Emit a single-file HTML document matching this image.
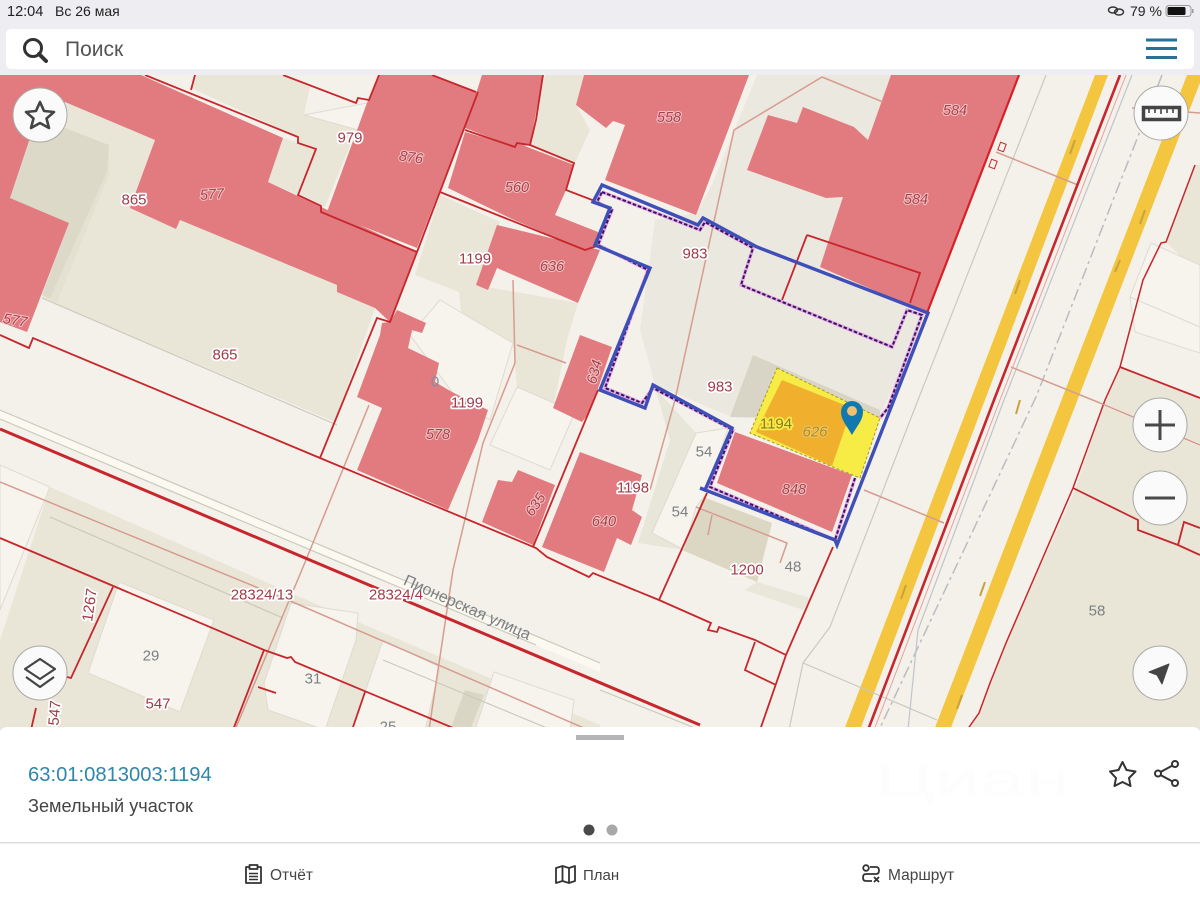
<!DOCTYPE html>
<html lang="ru"><head><meta charset="utf-8"><title>Карта</title>
<style>
html,body{margin:0;padding:0;background:#fff}
body{width:1200px;height:900px;overflow:hidden;position:relative;font-family:"Liberation Sans","Noto Sans CJK SC",sans-serif}
svg{position:absolute;left:0;top:0;display:block}
.l text{font-family:"Liberation Sans",sans-serif;font-size:15px;fill:#a23a48;text-anchor:middle;dominant-baseline:central;paint-order:stroke;stroke:#fff;stroke-width:3.5px;stroke-linejoin:round}
.l .p{stroke:#f3c4c4;stroke-width:2px;font-style:italic;fill:#a8404c;font-size:14.5px}
.l .g{fill:#7c8084;stroke:none;font-size:15px}
.ui{font-family:"Liberation Sans",sans-serif}
</style></head><body>
<svg width="1200" height="900" viewBox="0 0 1200 900" xmlns="http://www.w3.org/2000/svg">
<defs><clipPath id="m"><rect x="0" y="75" width="1200" height="655"/></clipPath></defs>
<rect width="1200" height="900" fill="#fff"/>
<g clip-path="url(#m)">
<rect y="75" width="1200" height="655" fill="#f4f1ea"/>
<!-- beige zones -->
<g fill="#e9e6d8">
<polygon points="65,102 155,140 130,208 176,229 180,220 337,285 337,292 375,308 335,422 42,298 69,223 10,198"/>
<polygon points="191,88 298,137 298,143 316,149 298,193 325,207 367,103 304,115 310,87 283,75 195,75"/>
<polygon points="283,138 268,182 298,195 316,149"/>
<polygon points="545,75 584,75 576,105 590,130 574,165 530,145"/>
<polygon points="440,195 500,222 476,285 578,303 567,340 553,408 517,387 513,343 461,312 459,292 415,275"/>
<polygon points="50,487 300,597 365,625 600,725 600,730 0,730 0,640"/>
<polygon points="1120,367 1200,398 1200,730 967,730 979,713 990,683 1006,643 1075,490 1105,400"/>
<polygon points="1166,242 1195,165 1200,165 1200,275"/>
</g>
<polygon fill="#ebe8df" points="757,75 1019,75 927,313 878,420 732,417 655,385 640,330 655,220 696,213 711,187"/>
<polygon fill="#dcd9c9" points="31,135 65,128 109,145 107,172 57,302 42,295 69,223 10,198"/>
<polygon fill="#e4e1d2" points="109,145 109,175 57,302 50,298 107,172"/>
<polygon fill="#d8d5c6" points="753,355 880,410 880,420 730,417"/>
<polygon fill="#dcd7c3" points="703,497 772,523 757,582 682,550"/>
<polygon fill="#e9e6da" points="757,582 810,598 803,610 745,590"/>
<polygon fill="#e8e5d9" points="655,388 696,433 684,550 638,543 670,440"/>
<!-- light blocks -->
<g fill="#f7f4ee" stroke="#dedbd0" stroke-width="1">
<polygon points="696,433 728,428 707,493 696,507 684,550 652,533"/>
<polygon points="119,582 214,620 180,712 88,673"/>
<polygon points="291,603 358,613 356,640 325,730 268,710 264,683"/>
<polygon points="383,640 440,667 425,730 352,730"/>
<polygon points="494,672 574,700 570,730 475,730"/>
<polygon points="0,465 50,487 0,610"/>
<polygon points="1151,243 1200,265 1200,327 1130,297"/>
<polygon points="1130,297 1200,327 1200,353 1135,332"/>
<polygon points="304,115 367,103 358,130"/>
<polygon points="410,335 440,300 513,343 490,420 452,392"/>
<polygon points="517,387 575,412 550,470 490,445"/>
</g>
<polygon fill="#d9d6c5" points="465,690 484,695 470,730 450,730"/>
<polygon fill="#fbf9f0" points="0,410 600,663 600,672 0,419"/>
<!-- pink buildings -->
<g fill="#e27b7f">
<polygon points="0,75 141,75 283,138 268,182 417,252 390,322 375,308 337,292 337,285 180,220 176,229 130,208 155,140 65,102 31,135 10,198 69,223 27,332 0,322"/>
<polygon points="379,75 432,75 478,92 417,248 327,212 367,103"/>
<polygon points="482,75 543,75 530,145 515,147 465,128"/>
<polygon points="465,132 517,147 517,143 574,165 566,190 555,215 598,232 598,245 585,250 514,220 448,188"/>
<polygon points="497,225 600,250 578,303 497,268 488,290 476,285"/>
<polygon points="584,75 749,75 696,215 605,180 625,125 613,121 606,128 576,105"/>
<polygon points="891,75 1019,75 927,313 820,267 843,197 826,198 747,170 768,115 797,123 803,107 854,127 868,140"/>
<polygon points="397,310 426,323 422,333 412,330 408,348 439,363 435,382 452,392 488,410 478,440 448,510 357,470 382,408 357,397 380,335 382,323 390,322"/>
<polygon points="580,335 612,347 590,412 582,422 553,408"/>
<polygon points="518,470 555,485 533,545 482,522 498,480 512,482"/>
<polygon points="580,452 642,475 632,510 642,517 631,545 617,538 604,572 542,547"/>
<polygon points="735,432 852,475 832,532 717,483"/>
</g>
<!-- yellow roads -->
<polygon fill="#f4c63f" points="1095,75 1108,75 860,730 844,730"/>
<polygon fill="#f4c63f" points="1187,75 1203,75 950,730 934,730"/>
<g stroke="#c8a23c" stroke-width="2" fill="none">
<path d="M1075,140l-5,14M1020,280l-5,14M1145,210l-5,14M1020,400l-4,14M906,585l-5,14M962,695l-5,14M985,582l-5,14M1120,260l-5,12"/>
</g>
<!-- grey road lines -->
<g fill="none" stroke="#c9c9bc" stroke-width="1.2">
<path d="M1046,75 L918,400 L830,627 L803,663 L789,730"/>
<path d="M803,663 L937,720"/>
<path d="M42,298 L337,425"/>
<path d="M0,410 L600,663"/>
<path d="M0,419 L536,645"/>
<path d="M50,517 L283,618"/>
<path d="M383,660 L600,750"/>
<path d="M600,690 L800,770"/>
</g>
<path d="M1162,75 L1036,397 L879,730" fill="none" stroke="#b9bcc0" stroke-width="1.5" stroke-dasharray="12 4 3 4"/>
<path d="M1132,75 L1004,400 L918,630 L908,730" fill="none" stroke="#bfc4cc" stroke-width="1.2"/>
<!-- thin brown lines -->
<g fill="none" stroke="#d69c8f" stroke-width="1.5">
<path d="M822,77 L734,130 L675,400 L650,490"/>
<path d="M822,77 L883,102"/>
<path d="M996,152 L1078,185"/>
<path d="M1011,367 L1100,403"/>
<path d="M864,490 L944,523"/>
<path d="M696,507 L787,543 L780,563"/>
<path d="M0,482 L295,603 L600,735"/>
<path d="M513,280 L515,363 L483,443 L453,570 L429,730"/>
<path d="M369,405 L306,560 L235,730"/>
<path d="M517,345 L566,363"/>
<path d="M712,515 L708,535"/>
<path d="M1132,108 L1200,113"/>
</g>
<!-- red cadastre lines -->
<g fill="none" stroke="#c7262c" stroke-width="1.8" stroke-linejoin="miter">
<path d="M0,335 L29,348 L33,338 L320,458 L536,548 L547,557 L589,577 L593,573 L659,600 L711,623 L708,630 L717,632 L719,627 L755,640 L786,655"/>
<path d="M755,642 L745,670 L776,685"/>
<path d="M833,547 L786,655 L760,730"/>
<path d="M659,600 L707,493"/>
<path d="M0,538 L111,585 L264,650 L287,658 L291,657 L295,662 L470,735"/>
<path d="M113,587 L71,678 L67,677"/>
<path d="M264,650 L233,730"/>
<path d="M365,692 L352,730"/>
<path d="M36,708 L31,730"/>
<path d="M145,75 L298,137 L298,143 L316,149 L298,195 L321,206 L321,212 L417,252"/>
<path d="M191,90 L195,75"/>
<path d="M283,75 L356,103 L358,98 L369,100 L379,75"/>
<path d="M432,75 L476,92"/>
<path d="M478,92 L417,252 L390,322 L377,318 L320,458"/>
<path d="M465,130 L515,147 L517,143 L530,145 L536,120 L543,75"/>
<path d="M530,145 L574,163 L566,190 L600,203"/>
<path d="M440,192 L585,250 L600,245"/>
<path d="M598,390 L533,547"/>
<path d="M807,235 L920,273 L910,303"/>
<path d="M807,235 L782,300"/>
<path d="M1195,165 L1166,242 L1161,243 L1143,280 L1120,367 L1105,400 L1073,488 L1006,643 L990,683 L979,713 L967,730" stroke-width="1.5"/>
<path d="M1120,367 L1200,398"/>
<path d="M1073,488 L1138,520 L1138,530 L1178,545 L1200,555"/>
<path d="M1178,545 L1184,522 L1200,528"/>
<path d="M1100,403 L1200,445" stroke-width="1.2" stroke="#d98a88"/>
<path d="M258,687 L276,693"/>
<path d="M0,429 L700,725" stroke-width="3"/>
<path d="M1120,75 L994,400 L868,730" stroke-width="2.6"/>
<path d="M1019,75 L927,313" stroke="#d82028" stroke-width="2.2"/>
</g>
<path d="M1126,75 L1000,400 L874,730" fill="none" stroke="#e8a0a0" stroke-width="1"/>
<rect x="999" y="143" width="6" height="8" fill="none" stroke="#c7262c" transform="rotate(20 1002 147)"/>
<rect x="990" y="160" width="6" height="8" fill="none" stroke="#c7262c" transform="rotate(20 993 164)"/>
<!-- highlighted plot -->
<polygon fill="#f7ec45" stroke="#a89a20" stroke-width="1" stroke-dasharray="3 2" points="777,368 880,418 860,478 750,433"/>
<polygon fill="#f0b02e" points="782,380 852,408 832,466 756,432"/>
<!-- cadastral outline -->
<path d="M602,192 L700,230 705,222 753,248 741,285 892,347 907,310 922,315 888,408 880,418 M855,478 L835,540 710,487 733,430 653,388 642,403 605,388 648,270 598,245 612,210 597,202 L602,192" fill="none" stroke="#e8a6e6" stroke-width="3.5"/>
<path d="M602,192 L700,230 705,222 753,248 741,285 892,347 907,310 922,315 888,408 880,418 M855,478 L835,540 710,487 733,430 653,388 642,403 605,388 648,270 598,245 612,210 597,202 L602,192" fill="none" stroke="#33185f" stroke-width="2" stroke-dasharray="3.5 2"/>
<path d="M602,185 L698,225 703,218 757,247 928,313 837,545 835,540 700,488 705,490 732,428 653,385 645,408 600,390 650,268 595,245 610,208 593,202 Z" fill="none" stroke="#3f4fb8" stroke-width="3.4" stroke-linejoin="miter"/>
<!-- labels -->
<g class="l">
<text x="350" y="138">979</text>
<text class="p" x="411" y="158" transform="rotate(8 411 158)">876</text>
<text class="p" x="669" y="118">558</text>
<text class="p" x="955" y="111">584</text>
<text class="p" x="916" y="200">584</text>
<text x="134" y="200">865</text>
<text class="p" x="212" y="195" transform="rotate(-4 212 195)">577</text>
<text class="p" x="517" y="188">560</text>
<text x="475" y="259">1199</text>
<text class="p" x="552" y="267">636</text>
<text x="695" y="254">983</text>
<text class="p" x="15" y="321" transform="rotate(10 15 321)">577</text>
<text x="225" y="355">865</text>
<text x="720" y="387">983</text>
<text x="467" y="403">1199</text>
<text class="g" x="435" y="382" style="fill:#8090a8">0</text>
<text class="p" x="595" y="372" transform="rotate(-75 595 372)">634</text>
<text class="p" x="438" y="435">578</text>
<text x="776" y="424" style="fill:#8a7a20;stroke:#f7ec45">1194</text>
<text x="815" y="432" style="fill:#a88a30;stroke:#f4c860;stroke-width:2px;font-style:italic">626</text>
<text class="g" x="704" y="452">54</text>
<text x="633" y="488">1198</text>
<text class="p" x="794" y="490">848</text>
<text class="p" x="536" y="505" transform="rotate(-55 536 505)">635</text>
<text class="p" x="604" y="522">640</text>
<text class="g" x="680" y="512">54</text>
<text x="747" y="570">1200</text>
<text class="g" x="793" y="567">48</text>
<text class="g" x="1097" y="611">58</text>
<text x="262" y="595">28324/13</text>
<text x="396" y="595">28324/4</text>
<text class="g" x="467" y="608" transform="rotate(24 467 608)" style="font-size:16px">Пионерская улица</text>
<text x="90" y="605" transform="rotate(-82 90 605)">1267</text>
<text class="g" x="151" y="656">29</text>
<text class="g" x="313" y="679">31</text>
<text x="158" y="704">547</text>
<text x="55" y="713" transform="rotate(-85 55 713)">547</text>
<text class="g" x="388" y="727">25</text>
</g>
<!-- pin -->
<path d="M852,435 C847,426 841,420 841,412 A11,11 0 0 1 863,412 C863,420 857,426 852,435 Z" fill="#1279ae"/>
<circle cx="852" cy="411" r="5" fill="#f0c070"/>
</g>

<!-- status bar + search -->
<rect width="1200" height="75" fill="#eeeef2"/>
<rect x="6" y="29" width="1188" height="40" rx="5" fill="#fff"/>
<g class="ui" fill="#222">
<text x="7" y="16" font-size="14.5">12:04</text>
<text x="55" y="16" font-size="14">Вс 26 мая</text>
<text x="1130" y="16" font-size="14">79 %</text>
</g>
<g fill="none" stroke="#333" stroke-width="1.4"><ellipse cx="1113" cy="10" rx="4.5" ry="3"/><ellipse cx="1119" cy="12" rx="4.5" ry="3"/></g>
<rect x="1166" y="5.500" width="25" height="11" rx="3" fill="none" stroke="#999"/>
<rect x="1167.500" y="7" width="18" height="8" rx="1.500" fill="#111"/>
<rect x="1192" y="9" width="1.500" height="4" fill="#999"/>
<circle cx="33" cy="48" r="8.500" fill="none" stroke="#333" stroke-width="3"/>
<path d="M39,54 L46,61" stroke="#333" stroke-width="4" stroke-linecap="round"/>
<text class="ui" x="65" y="56" font-size="21" fill="#555">Поиск</text>
<path d="M1146,40H1177M1146,48.500H1177M1146,57.500H1177" stroke="#2a7096" stroke-width="3"/>

<!-- round buttons -->
<g fill="#fbfafa" stroke="#a9a9a4" stroke-width="1">
<circle cx="40" cy="115" r="27"/><circle cx="1161" cy="113" r="27"/>
<circle cx="1160" cy="425" r="27"/><circle cx="1160" cy="498" r="27"/>
<circle cx="1160" cy="673" r="27"/><circle cx="40" cy="673" r="27"/>
</g>
<path d="M40,102 L44,111 L54,112 L46.500,118.500 L49,128 L40,123 L31,128 L33.500,118.500 L26,112 L36,111 Z" fill="none" stroke="#444" stroke-width="2.600" stroke-linejoin="round"/>
<path d="M1143.500,107.500H1179.500V119.500H1143.500Z" fill="none" stroke="#444" stroke-width="3.500"/>
<path d="M1149,108v5M1155,108v5M1161,108v6M1167,108v5M1173,108v5" stroke="#444" stroke-width="1.600"/>
<path d="M1145,425H1175M1160,410V440" stroke="#4a4a4a" stroke-width="3"/>
<path d="M1145,498H1175" stroke="#4a4a4a" stroke-width="3"/>
<path d="M1149,672 L1169,664 L1162,684 L1157,675 Z" fill="#444" stroke="#444" stroke-linejoin="round"/>
<path d="M40,659 L55,669 L40,679 L25,669 Z" fill="none" stroke="#444" stroke-width="2.200" stroke-linejoin="round"/>
<path d="M26,677 L40,687 L54,677" fill="none" stroke="#444" stroke-width="2.200" stroke-linejoin="round"/>

<!-- bottom panel -->
<path d="M0,735 Q0,727 8,727 H1192 Q1200,727 1200,735 V842 H0 Z" fill="#fff"/>
<rect x="0" y="842" width="1200" height="1.500" fill="#dedede"/>
<rect x="576" y="735" width="48" height="5" fill="#b5b5b8"/>
<text class="ui" x="875" y="795" font-size="46" fill="#fefdfe" textLength="195" lengthAdjust="spacingAndGlyphs">Циан</text>
<text class="ui" x="28" y="781" font-size="20.200" fill="#2f86ab">63:01:0813003:1194</text>
<text class="ui" x="28" y="812" font-size="18" fill="#444" textLength="165" lengthAdjust="spacingAndGlyphs">Земельный участок</text>
<circle cx="589" cy="830" r="5.500" fill="#4a4a4a"/>
<circle cx="612" cy="830" r="5.500" fill="#a8a8a8"/>
<path d="M1122.500,762 L1126.500,770 L1135.500,771.500 L1129,778 L1130.500,786 L1122.500,782 L1114.500,786 L1116,778 L1110,771.500 L1118.500,770 Z" fill="none" stroke="#333" stroke-width="2" stroke-linejoin="round"/>
<g fill="none" stroke="#333" stroke-width="2"><circle cx="1175" cy="764" r="3"/><circle cx="1158" cy="773.500" r="3"/><circle cx="1175" cy="783" r="3"/><path d="M1172.500,765.500L1160.500,772M1160.500,775L1172.500,781.500"/></g>

<!-- bottom nav -->
<g fill="none" stroke="#333" stroke-width="1.800" stroke-linejoin="round">
<path d="M249,867H246V883H261V867H258"/><rect x="249.500" y="865" width="8" height="4"/>
<path d="M249,873.500H258M249,876.500H258M249,879.500H258" stroke-width="1.500"/>
<path d="M556,868 L562.500,866 L569,868 L575,866 V881 L569,883 L562.500,881 L556,883 Z"/>
<path d="M562.500,866V881M569,868V883"/>
<circle cx="866" cy="868" r="2.800"/>
<path d="M870,867 H876 Q879,867 879,870.500 Q879,874 876,874 H866 Q863,874 863,877.500 Q863,881 866,881 H872"/>
<path d="M874,877L879,882M879,877L874,882"/>
</g>
<g class="ui" font-size="15.500" fill="#444">
<text x="270" y="880">Отчёт</text>
<text x="583" y="880" font-size="15">План</text>
<text x="888" y="880">Маршрут</text>
</g>
</svg>
</body></html>
